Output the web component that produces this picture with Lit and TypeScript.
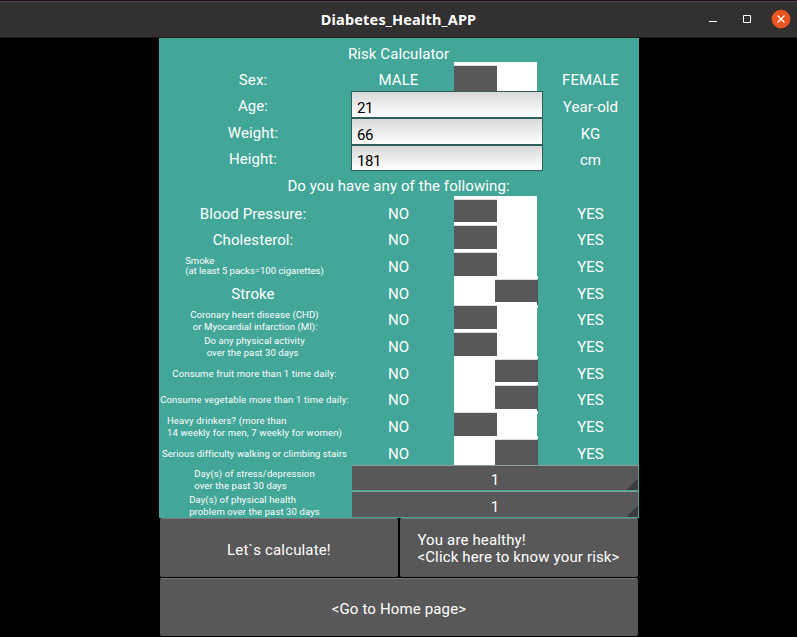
import { LitElement, html, css } from "lit";
import { customElement, property } from "lit/decorators.js";

interface Question {
  lines: string[];
  kind?: string;
  on: boolean;
}

const QUESTIONS: Question[] = [
  { lines: ["Blood Pressure:"], on: false },
  { lines: ["Cholesterol:"], on: false },
  { lines: ["Smoke", "(at least 5 packs=100 cigarettes)"], kind: "small tight", on: false },
  { lines: ["Stroke"], on: true },
  { lines: ["Coronary heart disease (CHD)", " or Myocardial infarction (MI):"], kind: "small", on: false },
  { lines: ["Do any physical activity", " over the past 30 days"], kind: "small", on: false },
  { lines: ["Consume fruit more than 1 time daily:"], kind: "small airy", on: true },
  { lines: ["Consume vegetable more than 1 time daily:"], kind: "small airy", on: true },
  { lines: ["Heavy drinkers? (more than", "14 weekly for men, 7 weekly for women)"], kind: "small airy", on: false },
  { lines: ["Serious difficulty walking or climbing stairs"], kind: "small", on: true },
];

@customElement("toggle-switch")
class ToggleSwitch extends LitElement {
  @property({ type: Boolean, reflect: true }) on = false;

  static styles = css`
    :host { display: block; align-self: center; justify-self: start; margin-left: 7px; margin-top: 0.9px; }
    .track { width: 83px; height: 32px; background: #fff; display: flex; align-items: flex-start; box-sizing: border-box; padding-top: 3px; }
    .thumb { width: 43px; height: 26px; box-sizing: border-box; background: #585858; border-top: 1px solid #dedede; flex: none; }
    :host([on]) .track { width: 84px; justify-content: flex-end; }
    :host([on]) .thumb { border-right: 1px solid #4c4f4f; }
  `;

  render() {
    return html`<div class="track"><div class="thumb"></div></div>`;
  }
}

@customElement("app-root")
class AppRoot extends LitElement {
  static styles = css`
    :host { display: flex; flex-direction: column; width: 797px; height: 637px; background: #000; color: #fff; font: 15px/18px Roboto, sans-serif; overflow: hidden; }
    .bar { height: 38px; flex: none; box-sizing: border-box; background: #333031; border-top: 1px solid #2b0620; border-bottom: 1px solid #1f1d1e; box-shadow: inset 0 1px #4b4648; display: grid; grid-template-columns: 1fr auto 1fr; align-items: center; }
    .title { grid-column: 2; font: bold 14.5px/20px "Noto Sans", sans-serif; letter-spacing: 0.18px; }
    .controls { justify-self: end; display: block; }
    .body { width: 480px; height: 599px; margin-left: 159px; display: flex; flex-direction: column; }
    .form { height: 480px; background: #42a698; display: grid; grid-template-rows: repeat(18, minmax(0, 1fr)); }
    .row { display: grid; grid-template-columns: 192px 96px 96px 96px; grid-template-rows: minmax(0, 1fr); }
    .text { place-self: center; white-space: pre; letter-spacing: 0.09px; padding-top: 4.9px; padding-right: 1px; }
    .lift { padding-top: 2.7px; }
    .head { grid-column: 1 / 5; }
    .mid { padding-top: 3px; }
    .label { margin-left: -4px; padding-right: 0; }
    .small { font-size: 9.5px; line-height: 12px; letter-spacing: 0.09px; padding-top: 5px; margin-left: -1px; }
    .airy { letter-spacing: 0.16px; }
    .low { padding-top: 3px; letter-spacing: 0.12px; }
    .tight { line-height: 10px; letter-spacing: 0; padding-top: 3px; }
    .line { display: block; }
    .field { grid-column: 2 / 4; box-sizing: border-box; border: 1px solid #2f5f5a; background: linear-gradient(#d9d9d9, #fff); color: #000; display: flex; align-items: flex-end; letter-spacing: -0.4px; padding: 0 5px; z-index: 1; }
    .spinner { grid-column: 2 / 5; margin: 0 1px 1px; box-sizing: border-box; border-top: 1px solid #8c9c9a; border-radius: 1px; background: linear-gradient(135deg, transparent calc(100% - 8px), #3b3b3b calc(100% - 8px)) #585858; display: flex; align-items: center; justify-content: center; padding-top: 5px; z-index: 1; }
    .actions { flex: 1; display: grid; grid-template: 60px 59px / 1fr 1fr; background: #000; }
    .button { margin: 0 1px 1px; background: #585858; border-top: 1px solid #777; border-radius: 2px; box-sizing: border-box; display: flex; align-items: center; justify-content: center; line-height: 17px; letter-spacing: 0.15px; white-space: pre; padding-top: 4px; }
    .result { padding: 2px 1px 0 0; }
    .wide { grid-column: 1 / 3; padding-top: 3px; }
  `;

  private label(lines: string[], kind = "") {
    return html`<div class="text label ${kind}">${lines.map((l) => html`<span class="line">${l}</span>`)}</div>`;
  }

  private toggleRow(lines: string[], off: string, onText: string, on: boolean, kind = "") {
    return html`<div class="row">
      ${this.label(lines, kind)}
      <div class="text">${off}</div>
      <toggle-switch ?on=${on}></toggle-switch>
      <div class="text">${onText}</div>
    </div>`;
  }

  private inputRow(name: string, value: string, unit: string) {
    return html`<div class="row">
      ${this.label([name], "lift")}
      <div class="field">${value}</div>
      <div class="text">${unit}</div>
    </div>`;
  }

  private spinnerRow(lines: string[]) {
    return html`<div class="row">${this.label(lines, "small low")}<div class="spinner">1</div></div>`;
  }

  render() {
    return html`
      <div class="bar">
        <div class="title">Diabetes_Health_APP</div>
        <svg class="controls" width="97" height="36" viewBox="700 1 97 36" fill="none">
          <path d="M709 21.5h8" stroke="#fff" />
          <path d="M743.5 15.5h7v7h-7z" stroke="#fff" />
          <circle cx="781" cy="19" r="9.3" fill="#e95420" />
          <path d="M777.5 15.5l7 7m0-7l-7 7" stroke="#fff" stroke-width="1.3" />
        </svg>
      </div>
      <div class="body">
        <div class="form">
          <div class="row"><div class="text head">Risk Calculator</div></div>
          ${this.toggleRow(["Sex:"], "MALE", "FEMALE", false)}
          ${this.inputRow("Age:", "21", "Year-old")}
          ${this.inputRow("Weight:", "66", "KG")}
          ${this.inputRow("Height:", "181", "cm")}
          <div class="row"><div class="text head mid">Do you have any of the following:</div></div>
          ${QUESTIONS.map((q) => this.toggleRow(q.lines, "NO", "YES", q.on, q.kind ?? ""))}
          ${this.spinnerRow(["Day(s) of stress/depression", "over the past 30 days"])}
          ${this.spinnerRow(["Day(s) of physical health", "problem over the past 30 days"])}
        </div>
        <div class="actions">
          <div class="button">${"Let`s calculate!"}</div>
          <div class="button result">${"You are healthy!\n<Click here to know your risk>"}</div>
          <div class="button wide">${"<Go to Home page>"}</div>
        </div>
      </div>
    `;
  }
}
